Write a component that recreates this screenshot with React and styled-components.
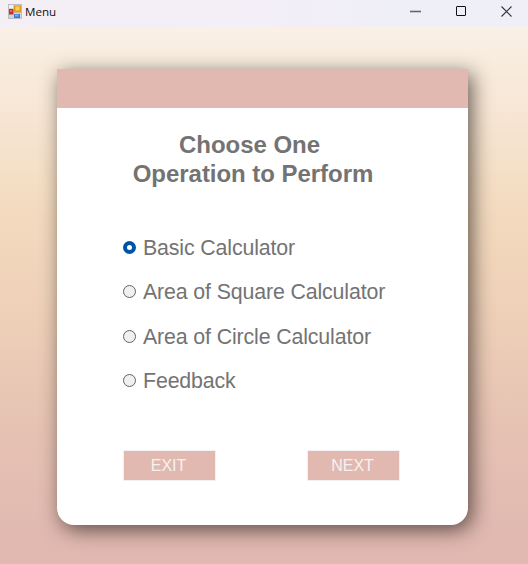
import React, { useState } from "react";
import styled, { createGlobalStyle } from "styled-components";

const GlobalStyle = createGlobalStyle`
  * { box-sizing: border-box; }
  body { margin: 0; overflow: hidden; font-family: "Liberation Sans", Arial, sans-serif; }
`;

const Window = styled.div`
  display: flex;
  flex-direction: column;
  width: 528px;
  height: 564px;
`;

const TitleBar = styled.header`
  display: flex;
  flex: none;
  justify-content: space-between;
  height: 27px;
  background: linear-gradient(90deg, #f3eff4 0%, #f4eef7 45%, #efeff8 75%, #f0eff8 100%);
`;

const Caption = styled.div`
  display: flex;
  align-items: center;
  gap: 3px;
  height: 23px;
  padding-left: 8px;
  font: 11.6px "Open Sans", sans-serif;
  color: #111;
`;

const WindowControls = styled.div`
  display: flex;
  height: 22px;
`;

const ControlButton = styled.button`
  display: flex;
  align-items: center;
  justify-content: center;
  width: 46px;
  padding: 0;
  border: 0;
  background: none;
  &:last-child { width: 44px; }
`;

const Backdrop = styled.main`
  display: flex;
  flex: 1;
  align-items: flex-start;
  padding: 42px 60px 0 57px;
  background: linear-gradient(180deg, #faf0e6 0%, #f3dabe 35%, #efd2b9 50%, #e6c2b3 75%, #e1b9b1 94%, #e1b9b1 100%);
`;

const Card = styled.section`
  width: 411px;
  height: 455.5px;
  overflow: hidden;
  border-radius: 0 0 17px 17px;
  background: #fff;
  box-shadow: 4px 5px 20px 0 rgba(40, 30, 25, 0.7);
`;

const CardHeader = styled.div`
  height: 39px;
  background: #e1b9b1;
`;

const Heading = styled.h1`
  width: 280px;
  margin: 22px 0 0 56px;
  font-size: 24px;
  line-height: 29px;
  font-weight: 700;
  letter-spacing: -0.04px;
  color: #737373;
  text-align: center;
`;

const HeadingLine = styled.span`
  display: block;
  white-space: nowrap;
  margin-left: ${({ $shift }) => $shift || 0}px;
`;

const Options = styled.div`
  display: grid;
  grid-template-rows: 44px 45px 44px 44px;
  align-items: start;
  margin: 47px 0 0 66px;
`;

const Option = styled.label`
  display: flex;
  align-items: center;
  gap: 7px;
  font-size: 21.33px;
  line-height: 24px;
  letter-spacing: -0.13px;
  color: #737373;
  white-space: nowrap;
`;

const OptionText = styled.span`
  padding-top: 1px;
`;

const Radio = styled.input`
  appearance: none;
  flex: none;
  width: 13px;
  height: 13px;
  margin: 0;
  border: 1px solid #626262;
  border-radius: 50%;
  background: #f0f0f0;
  &:checked {
    border: 4px solid #0054a8;
    background: #fff;
  }
`;

const Actions = styled.div`
  display: flex;
  justify-content: space-between;
  margin: 38px 68px 0 66px;
`;

const ActionButton = styled.button`
  width: 93px;
  height: 31px;
  padding: 0 2px 0 0;
  border: 1px solid #f2f0f0;
  background: #e1b9b1;
  color: #f5f2f0;
  font: 16px/29px "Liberation Sans", Arial, sans-serif;
`;

const choices = ["Basic Calculator", "Area of Square Calculator", "Area of Circle Calculator", "Feedback"];

function AppIcon() {
  return (
    <svg width="14" height="15" viewBox="0 0 14 15">
      <rect x=".5" y=".5" width="13" height="14" fill="#d3d2d8" stroke="#bcbcc4" />
      <rect x="1" y="1" width="4" height="3" fill="#f1f1f5" />
      <rect x="1" y="5" width="4.5" height="5.5" fill="#c23128" />
      <rect x="2" y="6" width="2" height="2" fill="#e66a55" />
      <rect x="6" y="1.5" width="7" height="7" fill="#dc9c22" />
      <rect x="7.5" y="2.5" width="4" height="4" fill="#fbcf58" />
      <rect x="6" y="10" width="6" height="4" fill="#3978e0" />
      <rect x="7" y="10.5" width="3.5" height="2" fill="#74abf6" />
    </svg>
  );
}

export default function App() {
  const [selected, setSelected] = useState(choices[0]);
  return (
    <>
      <GlobalStyle />
      <Window>
        <TitleBar>
          <Caption><AppIcon />Menu</Caption>
          <WindowControls>
            <ControlButton aria-label="Minimize">
              <svg width="11" height="11"><path d="M0 5.5H11" stroke="#66656b" strokeWidth="1.6" /></svg>
            </ControlButton>
            <ControlButton aria-label="Maximize">
              <svg width="10" height="10"><rect x=".5" y=".5" width="9" height="9" rx=".5" fill="none" stroke="#111" /></svg>
            </ControlButton>
            <ControlButton aria-label="Close">
              <svg width="11" height="11"><path d="M.5.5l10 10M10.5.5l-10 10" stroke="#333" strokeWidth="1.1" /></svg>
            </ControlButton>
          </WindowControls>
        </TitleBar>
        <Backdrop>
          <Card>
            <CardHeader />
            <Heading>
              <HeadingLine $shift={-7}>Choose One</HeadingLine>
              <HeadingLine>Operation to Perform</HeadingLine>
            </Heading>
            <Options>
              {choices.map((name) => (
                <Option key={name}>
                  <Radio type="radio" name="operation" checked={selected === name} onChange={() => setSelected(name)} />
                  <OptionText>{name}</OptionText>
                </Option>
              ))}
            </Options>
            <Actions>
              <ActionButton>EXIT</ActionButton>
              <ActionButton>NEXT</ActionButton>
            </Actions>
          </Card>
        </Backdrop>
      </Window>
    </>
  );
}
